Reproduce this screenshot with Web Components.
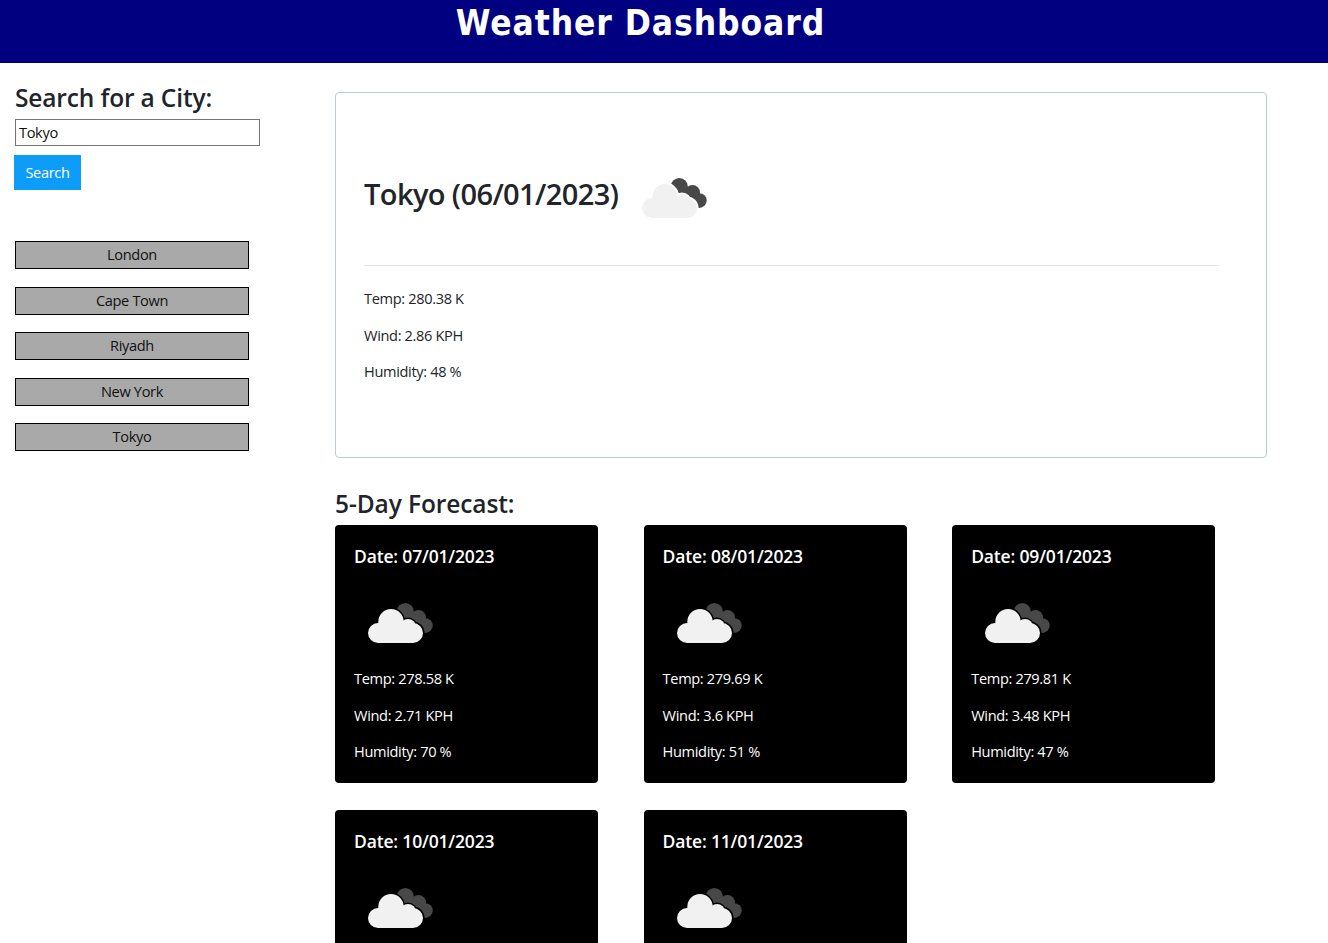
<!DOCTYPE html>
<html lang="en"><head><meta charset="utf-8"><title>Weather Dashboard</title>
<style>
html,body{margin:0;padding:0;height:943px;overflow:hidden;background:#fff}
body{font-family:"Open Sans","Noto Sans",sans-serif;color:#212529}
weather-app{display:block}
</style></head><body>
<weather-app></weather-app>
<script>
const FONT='"Open Sans","Noto Sans",sans-serif';
function def(name,html,init){customElements.define(name,class extends HTMLElement{constructor(){super();this.attachShadow({mode:'open'}).innerHTML=html;}connectedCallback(){if(init)init(this)}})}
def('weather-icon',`<style>:host{display:block;width:66px;height:40px}svg{display:block}</style>
<svg width="66" height="40" viewBox="0 0 66 40"><g fill="#484848"><circle cx="37.3" cy="8.7" r="8.6"/><circle cx="50.5" cy="14.5" r="7.5"/><circle cx="57.3" cy="22.6" r="7.4"/><rect x="34" y="12" width="20" height="15"/></g>
<g id="l" fill="#f1f1f1"><rect x="0" y="20" width="55" height="20" rx="10"/><circle cx="23" cy="18.7" r="12.7"/><circle cx="40" cy="24" r="8"/></g></svg>`,
el=>{const bg=el.getAttribute('bg')||'#fff';const g=el.shadowRoot.getElementById('l');const s=g.cloneNode(true);s.removeAttribute('id');s.setAttribute('fill',bg);s.setAttribute('stroke',bg);s.setAttribute('stroke-width','3');g.parentNode.insertBefore(s,g)});
def('app-header',`<style>:host{display:block;background:#000080;height:63px;color:#fff;overflow:hidden}
h1{margin:0;padding-right:47px;text-align:center;font:bold 35px/46px "DejaVu Sans",sans-serif;font-stretch:condensed;letter-spacing:.93px}</style><h1><slot></slot></h1>`);
def('city-button',`<style>:host{display:block;margin-bottom:17.6px}
button{display:block;box-sizing:border-box;width:234px;height:28px;padding:0 0 2px;background:#a9a9a9;border:1px solid #000;color:#111;font:14.6px/24px ${FONT};letter-spacing:-.35px;text-align:center}</style><button><slot></slot></button>`);
def('search-panel',`<style>:host{display:block;width:335px;flex:none;box-sizing:border-box;padding:18px 0 0 15px}
h2{margin:0;font:600 24.5px/34px ${FONT};letter-spacing:-.15px;color:#212529}
input{display:block;box-sizing:border-box;width:245px;height:27px;margin:4px 0 9px;padding:0 3px 2px;border:1px solid #767676;font:14.6px ${FONT};letter-spacing:-.35px;color:#111;background:#fff;border-radius:0}
.go{display:block;margin-left:-1px;width:67px;height:35px;border:0;padding:0 0 2px;background:#0d9cf8;color:#fff;font:14.6px ${FONT};letter-spacing:-.35px}
.list{margin-top:51px}</style>
<h2>Search for a City:</h2><input value="Tokyo"><button class="go">Search</button><div class="list"><slot></slot></div>`);
def('current-weather',`<style>:host{display:block;box-sizing:border-box;width:932px;height:366px;border:1px solid #b7cdd0;border-radius:4px;padding:0 47px 0 28px;margin-top:29px}
.t{display:flex;align-items:flex-end;height:125px}
h2{margin:0 23px 0 0;font:600 29px/40px ${FONT};letter-spacing:-.6px;padding-bottom:4px}
weather-icon{margin:0 0 0 1px}
hr{border:0;border-top:1px solid #dfe5e7;margin:47px 0 0}
.s{margin-top:20px;font:14.6px/24px ${FONT};letter-spacing:-.35px}
p{margin:0 0 12.5px}</style>
<div class="t"><h2>Tokyo (06/01/2023)</h2><weather-icon></weather-icon></div><hr>
<div class="s"><p>Temp: 280.38 K</p><p>Wind: 2.86 KPH</p><p>Humidity: 48 %</p></div>`);
def('forecast-card',`<style>:host{display:block;box-sizing:border-box;height:258px;background:#000;color:#fff;border-radius:4px;padding:18px 19px 0}
h3{margin:0;font:600 17.5px/26px ${FONT};letter-spacing:-.17px}
weather-icon{margin:34px 0 0 14px}
.s{margin-top:23px;font:14.6px/24px ${FONT};letter-spacing:-.35px}
p{margin:0 0 12.5px}</style>
<h3 id="d"></h3><weather-icon bg="#000"></weather-icon>
<div class="s" id="s"></div>`,
el=>{const r=el.shadowRoot;r.getElementById('d').textContent='Date: '+el.getAttribute('date');
const s=r.getElementById('s');[['Temp: ','temp',' K'],['Wind: ','wind',' KPH'],['Humidity: ','hum',' %']].forEach(([a,k,b])=>{if(el.hasAttribute(k)){const p=document.createElement('p');p.textContent=a+el.getAttribute(k)+b;s.appendChild(p)}})});
def('forecast-section',`<style>:host{display:block;margin-top:29px}
h2{margin:0;font:600 24.5px/34px ${FONT};letter-spacing:-.1px}
.g{display:grid;grid-template-columns:repeat(3,263px);column-gap:45.6px;row-gap:27px;margin-top:4px}</style>
<h2>5-Day Forecast:</h2><div class="g"><slot></slot></div>`);
def('weather-app',`<style>:host{display:block;height:943px;overflow:hidden}.m{display:flex}main{display:block;flex:1}</style>
<app-header>Weather Dashboard</app-header>
<div class="m"><search-panel><city-button>London</city-button><city-button>Cape Town</city-button><city-button>Riyadh</city-button><city-button>New York</city-button><city-button>Tokyo</city-button></search-panel>
<main><current-weather></current-weather><forecast-section>
<forecast-card date="07/01/2023" temp="278.58" wind="2.71" hum="70"></forecast-card>
<forecast-card date="08/01/2023" temp="279.69" wind="3.6" hum="51"></forecast-card>
<forecast-card date="09/01/2023" temp="279.81" wind="3.48" hum="47"></forecast-card>
<forecast-card date="10/01/2023"></forecast-card>
<forecast-card date="11/01/2023"></forecast-card>
</forecast-section></main></div>`);
</script></body></html>
